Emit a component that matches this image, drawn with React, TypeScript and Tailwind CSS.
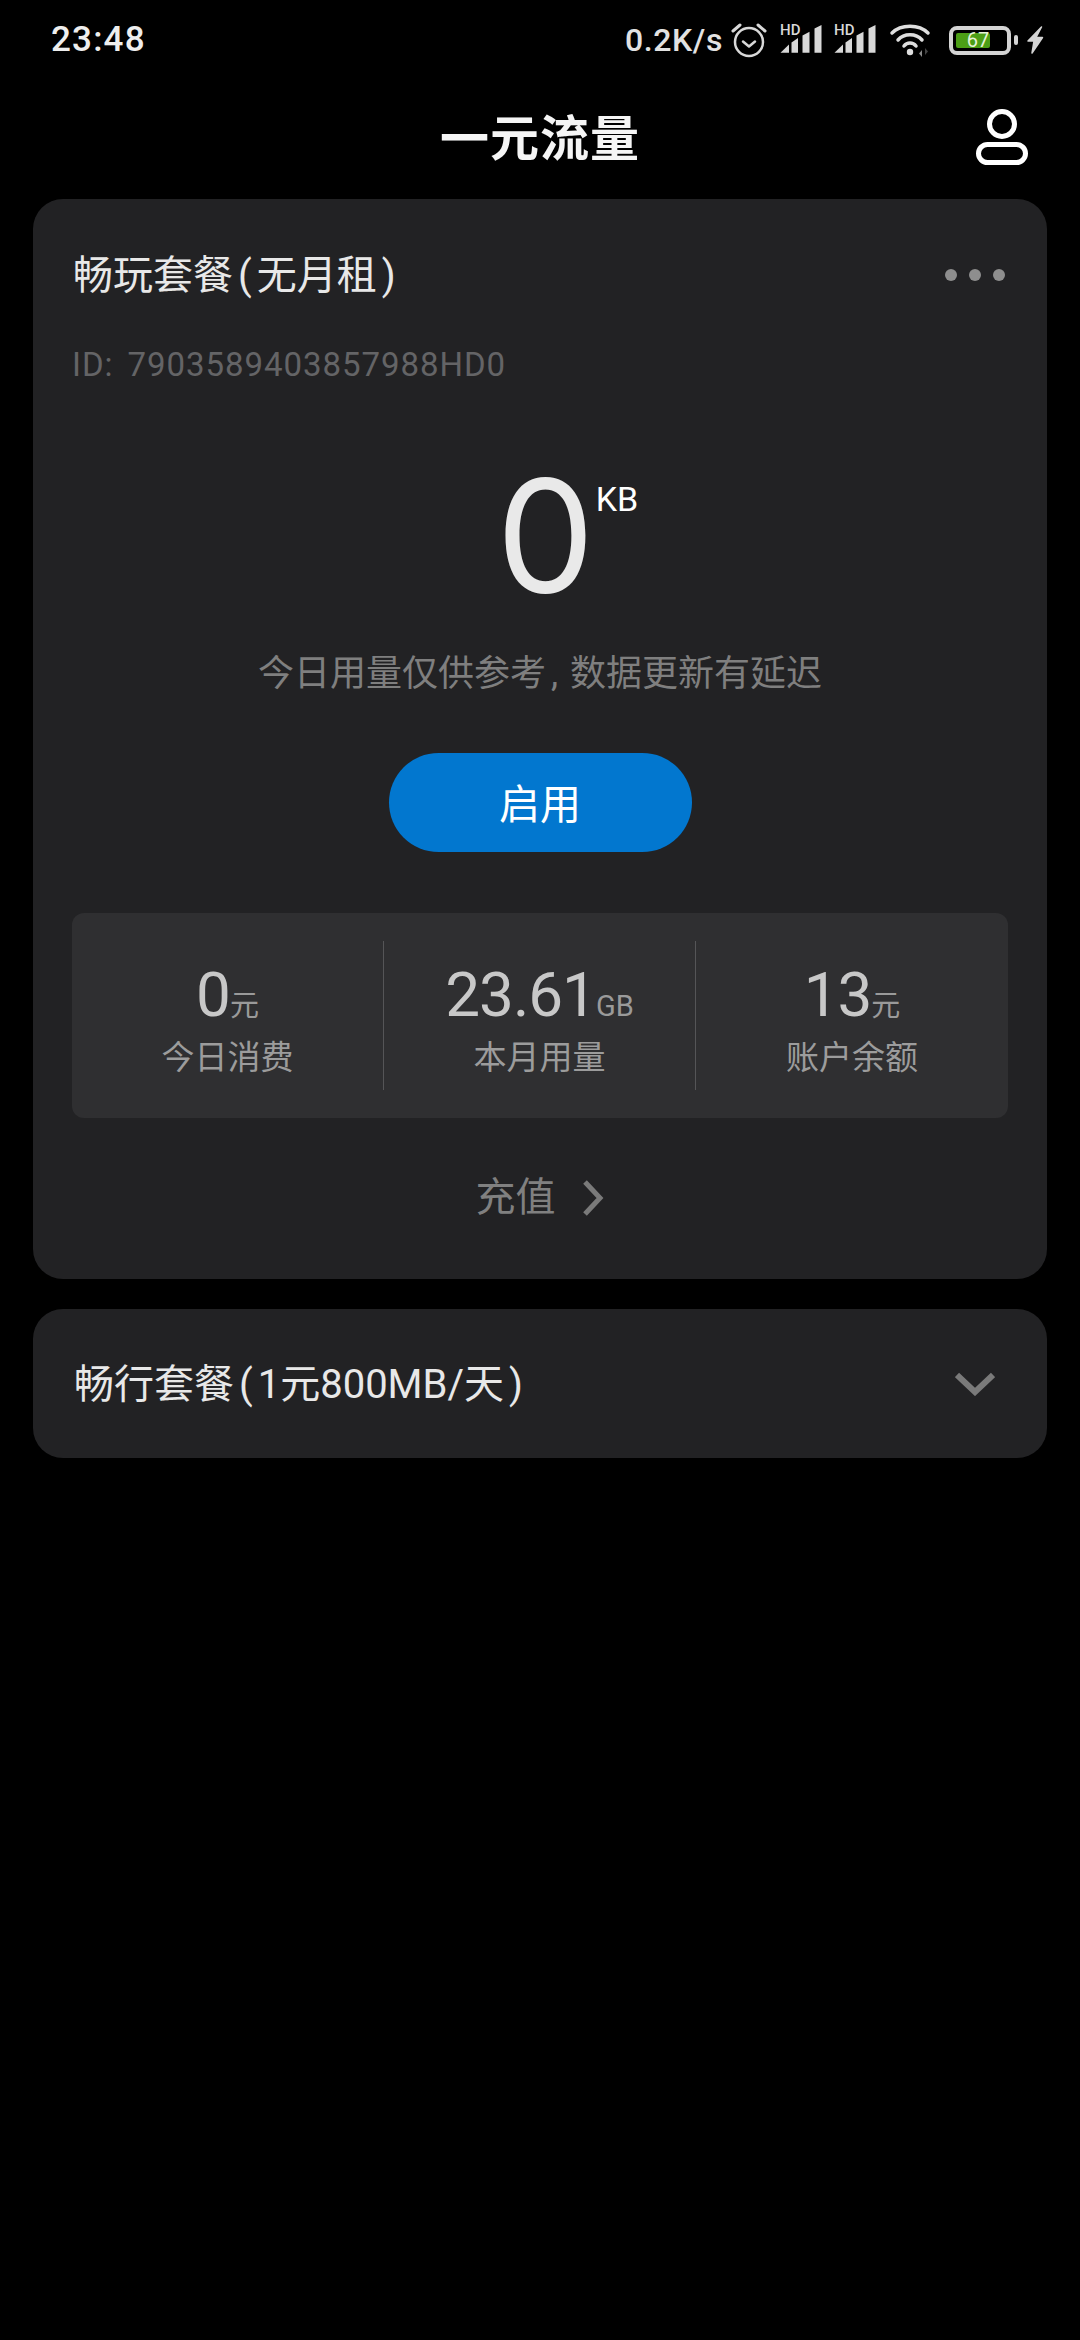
import React from 'react';

const stats = [
  { value: '0', unit: '元', label: '今日消费' },
  { value: '23.61', unit: 'GB', label: '本月用量' },
  { value: '13', unit: '元', label: '账户余额' },
];

const SignalIcon: React.FC = () => (
  <svg width="42" height="44" viewBox="0 -6 42 44" fill="#d8d8d8">
    <text x="0" y="11" fontSize="15" fontWeight="500" fontFamily="Roboto, sans-serif">HD</text>
    <polygon points="0.500,28.700 9,28.700 9,20.500" />
    <polygon points="11.500,28.700 18,28.700 18,14 11.500,18.500" />
    <polygon points="22.500,28.700 29.500,28.700 29.500,7.700 22.500,11.500" />
    <polygon points="34.500,28.700 41.500,28.700 41.500,1 34.500,4.500" />
  </svg>
);

const StatusIcons: React.FC = () => (
  <div className="flex items-center">
    <svg width="36" height="36" viewBox="0 0 36 36" fill="none" stroke="#d8d8d8" className="ml-[8px]">
      <circle cx="18" cy="20" r="14" strokeWidth="2.500" />
      <path d="M12 19.500l6 5 6-5" strokeWidth="2.500" strokeLinecap="round" strokeLinejoin="round" />
      <path d="M2 9l7-6M34 9l-7-6" strokeWidth="3" strokeLinecap="round" />
    </svg>
    <div className="ml-[13px] flex gap-[12px]">
      <SignalIcon />
      <SignalIcon />
    </div>
    <svg width="44" height="36" viewBox="0 0 44 36" fill="none" className="ml-[13px]">
      <path d="M3 11C12 2 30 2 39 11" stroke="#dedede" strokeWidth="3.500" strokeLinecap="round" />
      <path d="M9 18C15 11 27 11 33 18" stroke="#dedede" strokeWidth="3.500" strokeLinecap="round" />
      <path d="M15 24C18 20 24 20 27 24" stroke="#dedede" strokeWidth="3.500" strokeLinecap="round" />
      <circle cx="21" cy="30" r="3.200" fill="#dedede" />
      <path d="M33 28v7l-3-3.500z" fill="#8a8a8a" />
      <path d="M36 26v7l3-3.500z" fill="#444444" />
    </svg>
    <div className="relative ml-[16px] h-[29px] w-[62px] rounded-[8px] border-[4px] border-[#d4d4d4]">
      <div className="ml-[3px] mt-[3px] h-[15px] w-[34px] rounded-[2px] bg-[#4c9f16]" />
      <span className="absolute inset-0 flex items-center justify-center pr-[4px] text-[20px] leading-none text-[#e6f4d8]">67</span>
    </div>
    <div className="ml-[3px] h-[10px] w-[4px] rounded-[2px] bg-[#d4d4d4]" />
    <svg width="18" height="30" viewBox="0 0 18 30" fill="#d4d4d4" stroke="#d4d4d4" strokeWidth="1.500" strokeLinejoin="round" className="ml-[8px]">
      <polygon points="15.500,2 2,16 8,16 6,28 16.500,12.500 10,12.500" />
    </svg>
  </div>
);

const StatusBar: React.FC = () => (
  <div className="flex h-[80px] items-center justify-between pl-[51px] pr-[36px]">
    <span className="text-[35px] font-medium tracking-[1.200px] text-[#eeeeee]">23:48</span>
    <div className="flex items-center">
      <span className="text-[32px] font-medium tracking-[0.600px] text-[#e2e2e2]">0.2K/s</span>
      <StatusIcons />
    </div>
  </div>
);

const UserIcon: React.FC = () => (
  <svg width="56" height="60" viewBox="0 0 56 60" fill="none" stroke="#ffffff" strokeWidth="5">
    <circle cx="28" cy="16" r="12.500" />
    <rect x="4.500" y="36.500" width="47" height="18" rx="9" />
  </svg>
);

const App: React.FC = () => {
  return (
    <div className="min-h-[2340px] bg-black font-['Roboto','Noto_Sans_CJK_SC',sans-serif]">
      <StatusBar />

      <div className="relative flex h-[119px] items-center justify-center">
        <h1 className="text-[49px] font-bold leading-none tracking-[1px] text-[#f5f5f5]">一元流量</h1>
        <div className="absolute right-[50px] top-[28px]">
          <UserIcon />
        </div>
      </div>

      <div className="mx-[33px] rounded-[30px] bg-[#222224] px-[39px] pb-[56px] pt-[52px]">
        <div className="flex h-[48px] items-center justify-between pl-[1px] pr-[3px]">
          <span className="pt-[1px] text-[40px] leading-none text-[#e8e8e8]">
            畅玩套餐<span className="mx-[5px]">(</span>无月租<span className="mx-[5px]">)</span>
          </span>
          <div className="flex gap-[12px]">
            <div className="size-[12px] rounded-full bg-[#8e8e8e]" />
            <div className="size-[12px] rounded-full bg-[#8e8e8e]" />
            <div className="size-[12px] rounded-full bg-[#8e8e8e]" />
          </div>
        </div>

        <div className="mt-[46px] h-[40px] text-[33px] leading-[40px] tracking-[0.950px] text-[#646466]">
          ID:<span className="ml-[14px]">7903589403857988HD0</span>
        </div>

        <div className="mt-[71px] flex h-[160px] justify-center pl-[11px]">
          <div className="relative">
            <span className="font-['Inter',sans-serif] text-[156px] font-normal leading-[160px] text-[#e9e9e9]">0</span>
            <span className="absolute left-full top-[23px] ml-[1px] text-[34px] leading-[40px] text-white">KB</span>
          </div>
        </div>

        <div className="mt-[33px] h-[49px] text-center text-[36px] leading-[50px] text-[#7f7f7f]">
          今日用量仅供参考<span className="ml-[5px] mr-[12px]">,</span>数据更新有延迟
        </div>

        <button className="mx-auto mt-[55px] flex h-[99px] w-[303px] items-center justify-center rounded-full bg-[#0277cf] pt-[6px] text-[41px] font-normal text-white">
          启用
        </button>

        <div className="mt-[61px] grid h-[205px] grid-cols-3 rounded-[12px] bg-[#2f2f31] py-[28px]">
          {stats.map((s, i) => (
            <div key={s.label} className={`flex h-[149px] flex-col items-center pt-[23px] ${i < 2 ? 'border-r border-[#555557]' : ''}`}>
              <div className="flex h-[62px] items-baseline">
                <span className="text-[62px] font-normal leading-[62px] tracking-[-1px] text-[#c8c8c8]">{s.value}</span>
                <span className="text-[29px] text-[#9a9a9a]">{s.unit}</span>
              </div>
              <span className="mt-[12px] text-[33px] leading-[40px] text-[#9c9c9c]">{s.label}</span>
            </div>
          ))}
        </div>

        <div className="mt-[55px] flex h-[50px] items-center justify-center">
          <span className="text-[40px] leading-none text-[#808080]">充值</span>
          <svg width="24" height="36" viewBox="0 0 24 36" fill="none" stroke="#7a7a7a" strokeWidth="5" className="ml-[25px]">
            <path d="M4 2l15 16L4 34" />
          </svg>
        </div>
      </div>

      <div className="mx-[33px] mt-[30px] flex h-[149px] items-center justify-between rounded-[30px] bg-[#222224] pl-[41px] pr-[52px]">
        <span className="pt-[3px] text-[40px] leading-none text-[#e8e8e8]">
          畅行套餐<span className="mx-[5px]">(</span>1元800MB/天<span className="mx-[5px]">)</span>
        </span>
        <svg width="40" height="24" viewBox="0 0 40 24" fill="none" stroke="#7a7a7a" strokeWidth="6">
          <path d="M2 3l18 17L38 3" />
        </svg>
      </div>
    </div>
  );
};

export default App;
